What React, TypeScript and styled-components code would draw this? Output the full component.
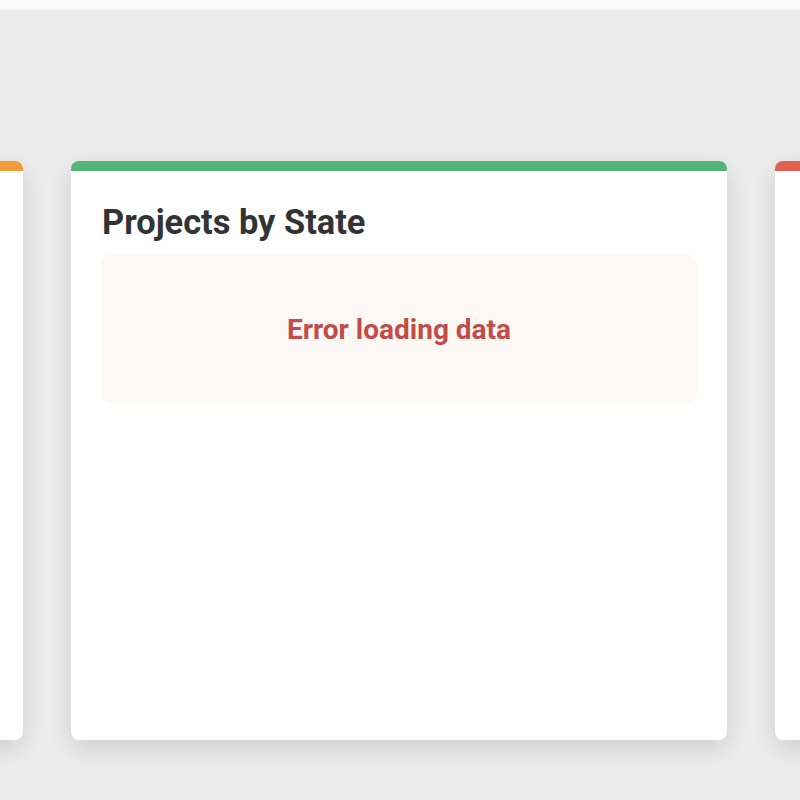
import styled, { createGlobalStyle } from "styled-components";

const GlobalStyle = createGlobalStyle`
  html, body {
    margin: 0;
    padding: 0;
    background: #ececec;
    font-family: Roboto, "Liberation Sans", sans-serif;
  }
`;

const cards = [
  { id: "left", accent: "#f39a3a", title: "" },
  { id: "state", accent: "#53b57a", title: "Projects by State" },
  { id: "right", accent: "#e0604d", title: "" },
];

const App = () => {
  return (
    <>
      <GlobalStyle />
      <Page>
        <TopBar />
        <Stage>
          <CardRow>
            {cards.map(({ id, accent, title }) => (
              <Card key={id} accent={accent}>
                {title && (
                  <>
                    <Title>{title}</Title>
                    <ErrorBox>
                      <ErrorText>Error loading data</ErrorText>
                    </ErrorBox>
                  </>
                )}
              </Card>
            ))}
          </CardRow>
        </Stage>
      </Page>
    </>
  );
};

const Page = styled.div`
  display: flex;
  flex-direction: column;
  min-height: 800px;
  overflow: hidden;
`;

const TopBar = styled.div`
  height: 10px;
  background: #fafafa;
`;

const Stage = styled.div`
  flex: 1;
  padding: 151px 0 60px;
  background: #ececec;
`;

const CardRow = styled.div`
  display: flex;
  justify-content: center;
  gap: 48px;
  padding-right: 2px;
`;

const Card = styled.div<{ accent: string }>`
  flex-shrink: 0;
  box-sizing: border-box;
  width: 656px;
  height: 579px;
  padding: 30px;
  background: #ffffff;
  border-top: 10px solid ${({ accent }) => accent};
  border-radius: 8px;
  box-shadow: 0 8px 24px rgba(0, 0, 0, 0.13);
  display: flex;
  flex-direction: column;
  gap: 12px;
`;

const Title = styled.h2`
  margin: 0;
  padding-left: 1px;
  color: #333333;
  font-size: 34.4px;
  font-weight: 700;
  line-height: 42px;
`;

const ErrorBox = styled.div`
  height: 148px;
  display: flex;
  align-items: center;
  justify-content: center;
  background: #fdf7f6;
  border-radius: 10px;
`;

const ErrorText = styled.div`
  color: #c24d47;
  font-size: 28px;
  font-weight: 700;
`;

export default App;
